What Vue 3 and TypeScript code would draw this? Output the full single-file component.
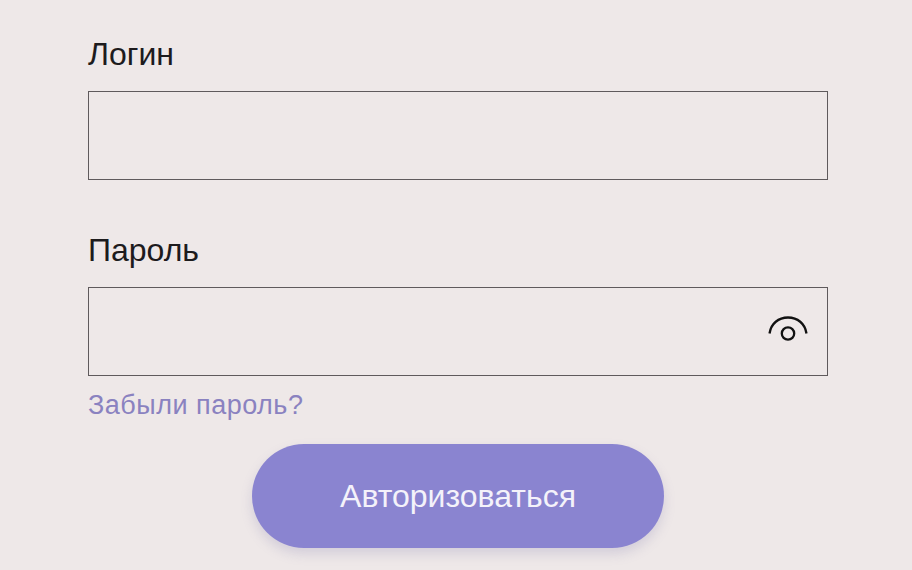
<script setup lang="ts">
const title = 'Авторизоваться'
</script>

<template>
  <div class="page">
    <form class="form" @submit.prevent>
      <label class="field login">
        <span class="label">Логин</span>
        <input class="input" type="text" />
      </label>
      <label class="field password">
        <span class="label">Пароль</span>
        <span class="wrap">
          <input class="input" type="password" />
          <svg class="eye" width="40" height="32" viewBox="0 0 40 32" fill="none" stroke="#111" stroke-width="2.3">
            <path d="M1.500 21.500C3 11.500 10.500 5.500 20 5.500s17 6 18.500 16" />
            <circle cx="20" cy="21.500" r="6.200" />
          </svg>
        </span>
      </label>
      <a class="forgot" href="#">Забыли пароль?</a>
      <button class="btn" type="submit">{{ title }}</button>
    </form>
  </div>
</template>

<style>
html, body { margin: 0; background: #eee8e8; }
</style>

<style scoped>
.page {
  width: 912px;
  height: 570px;
  overflow: hidden;
  background: #eee8e8;
  font-family: "Liberation Sans", Arial, sans-serif;
  box-sizing: border-box;
  padding: 36px 84px 0 88px;
}
.form { display: flex; flex-direction: column; }
.field { display: flex; flex-direction: column; }
.label {
  font-size: 32px;
  line-height: 37px;
  color: #1d1b1d;
  margin-bottom: 18px;
}
.password { margin-top: 52px; }
.wrap { position: relative; display: block; }
.input {
  display: block;
  width: 100%;
  height: 89px;
  box-sizing: border-box;
  border: 1px solid #5f5a5c;
  background: transparent;
  border-radius: 0;
  outline: none;
}
.eye { position: absolute; right: 20px; top: 25px; }
.forgot {
  margin-top: 14px;
  font-size: 27px;
  line-height: 30px;
  color: #8a82c0;
  text-decoration: none;
  letter-spacing: 0.5px;
}
.btn {
  align-self: center;
  margin-top: 24px;
  width: 412px;
  height: 104px;
  border: none;
  border-radius: 52px;
  background: #8a84d0;
  color: #f4f2fa;
  font-family: inherit;
  font-size: 32px;
  box-shadow: 0 6px 12px rgba(120, 112, 170, 0.22);
}
</style>
